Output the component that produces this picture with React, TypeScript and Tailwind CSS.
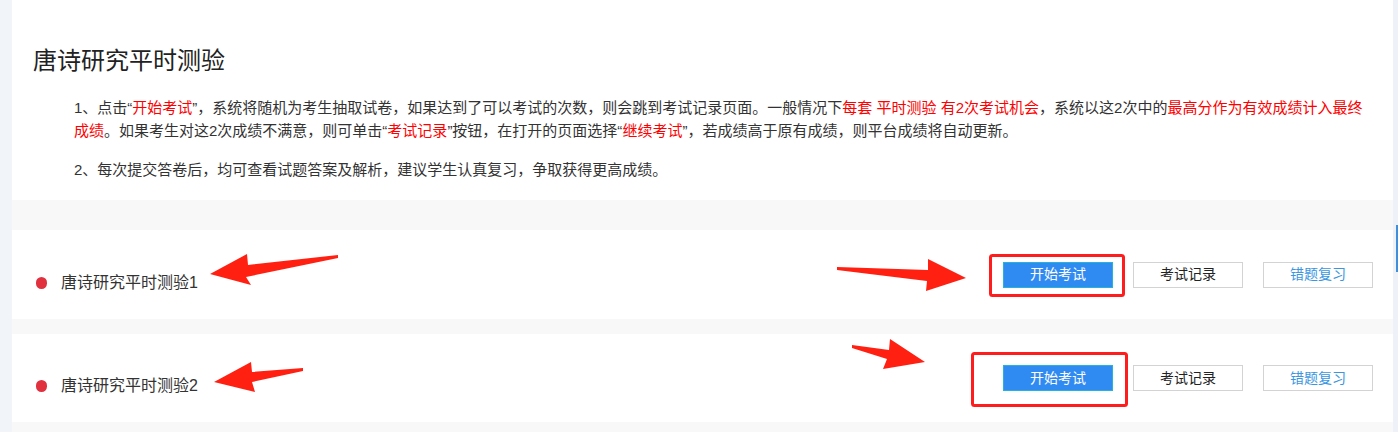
import React from "react";

const R = ({ children }: { children: React.ReactNode }) => (
  <span className="text-[#ff0000]">{children}</span>
);
const T = ({ children }: { children: React.ReactNode }) => <span>{children}</span>;

function ExamRow({ title }: { title: string }) {
  return (
    <div className="flex h-full items-center justify-between bg-white pl-[24px] pr-[20px]">
      <div className="mt-[16px] flex items-center gap-[14px]">
        <span className="h-[12px] w-[11px] rounded-full bg-[#e1303e]" />
        <span className="text-[16px] leading-[22px] text-[#333]">{title}</span>
      </div>
      <div className="flex items-center gap-[20px]">
        <button className="h-[26px] w-[110px] border border-[#27b2d8] bg-[#2f8bf2] text-[14px] text-white">
          开始考试
        </button>
        <button className="h-[26px] w-[110px] border border-[#d3d3d3] bg-white text-[14px] text-[#222]">
          考试记录
        </button>
        <button className="h-[26px] w-[110px] border border-[#d3d3d3] bg-white text-[14px] text-[#3a96e0]">
          错题复习
        </button>
      </div>
    </div>
  );
}

export default function App() {
  return (
    <div className="relative flex h-[432px] w-[1398px] overflow-hidden bg-[#f8f8f8] font-['Liberation_Sans','Noto_Sans_CJK_SC',sans-serif]">
      <div className="w-[12px] shrink-0 bg-[#f1f4f9]" />

      <div className="flex flex-1 flex-col">
        <div className="bg-white pt-[45px] pb-[19px] pl-[21px] pr-[20px]">
          <h1 className="text-[24px] leading-[32px] text-[#222]">唐诗研究平时测验</h1>
          <div className="mt-[19px] pl-[41px] text-[15px] leading-[23px] text-[#333]">
            <p>
              <T>1、点击“</T>
              <R>开始考试</R>
              <T>”，系统将随机为考生抽取试卷，如果达到了可以考试的次数，则会跳到考试记录页面。一般情况下</T>
              <R>每套 平时测验 有2次考试机会</R>
              <T>，系统以这2次中的</T>
              <R>最高分作为有效成绩计入最终成绩</R>
              <T>。如果考生对这2次成绩不满意，则可单击“</T>
              <R>考试记录</R>
              <T>”按钮，在打开的页面选择“</T>
              <R>继续考试</R>
              <T>”，若成绩高于原有成绩，则平台成绩将自动更新。</T>
            </p>
            <p className="mt-[16px]">
              2、每次提交答卷后，均可查看试题答案及解析，建议学生认真复习，争取获得更高成绩。
            </p>
          </div>
        </div>

        <div className="mt-[30px] h-[89px]">
          <ExamRow title="唐诗研究平时测验1" />
        </div>
        <div className="mt-[15px] h-[88px]">
          <ExamRow title="唐诗研究平时测验2" />
        </div>
      </div>

      <div className="relative w-[5px] shrink-0 bg-[#eef2f8]">
        <div className="absolute right-0 top-[225px] h-[47px] w-[2px] bg-[#3f8fdc]" />
      </div>

      {/* annotation layer: arrows and red boxes */}
      <svg
        className="pointer-events-none absolute inset-0"
        width="1398"
        height="432"
        viewBox="0 0 1398 432"
      >
        <g fill="#ff2012">
          <polygon points="210,274 247,254 248,265 338,255 338,258 246,277 251,285" />
          <polygon points="837,267 928,270 928,259 966,278 926,291 927,281 837,270" />
          <polygon points="214,382 251,362 252,372 303,368 303,371 252,382 255,392" />
          <polygon points="852,345 889,350 890,339 925,362 883,369 887,359 852,348" />
        </g>
        <g fill="none" stroke="#ff1c1c" strokeWidth="3">
          <rect x="990.5" y="255.5" width="133" height="40" rx="2" />
          <rect x="972.5" y="353.5" width="154" height="52" rx="2" />
        </g>
      </svg>
    </div>
  );
}
